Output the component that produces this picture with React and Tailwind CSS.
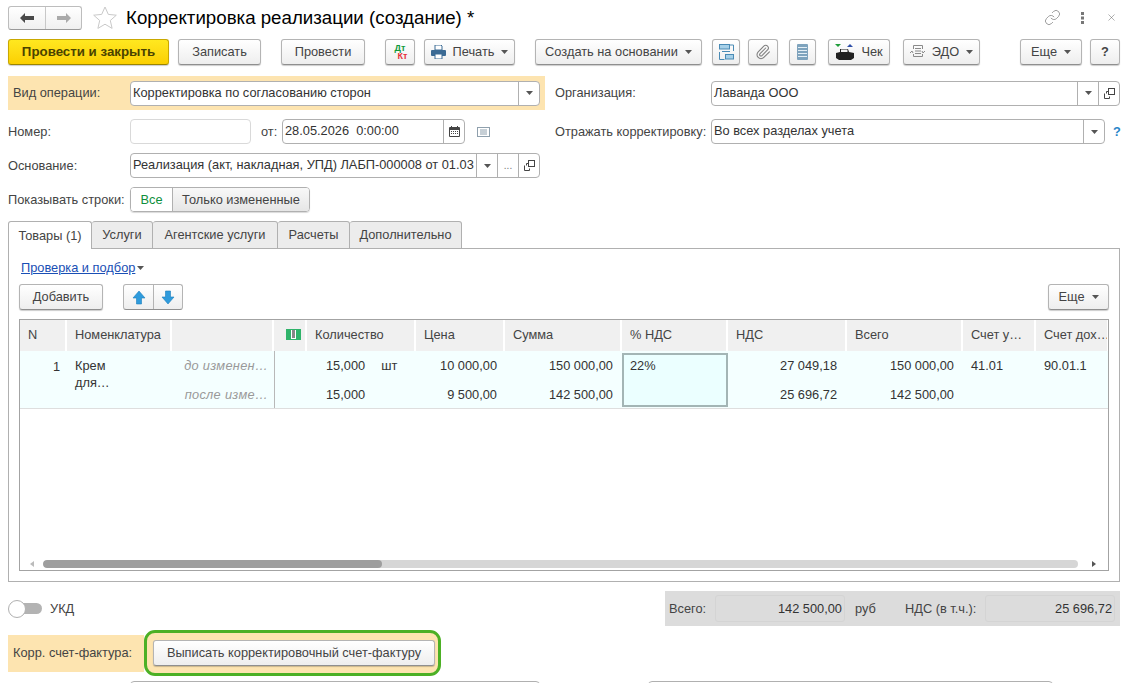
import { Link, Paperclip, X } from "lucide-react";

const ORANGE = "bg-[#fde4b0]";
const COLS = "grid-cols-[47px_105px_102px_33px_109px_89px_117px_106px_119px_116px_73px_73px]";

// small dropdown triangle used on buttons and fields
const Caret = ({ className = "" }) => (
    <svg width="7" height="4" viewBox="0 0 7 4" className={className}>
        <path d="M0 0h7L3.5 4z" fill="#555" />
    </svg>
);

const Btn = ({ className = "", children }) => (
    <button className={`flex h-[26px] shrink-0 items-center justify-center rounded-[3px] border border-[#b4b4b4] border-b-[#8f8f8f] bg-gradient-to-b from-white to-[#eeeeee] text-[#444] shadow-[0_1px_1px_rgba(0,0,0,0.2)] ${className}`}>
        {children}
    </button>
);

const Field = ({ className = "", text, children }) => (
    <div className={`flex h-[25px] shrink-0 items-stretch rounded-[4px] border border-[#b0b0b0] bg-white text-[#333] ${className}`}>
        <div className="min-w-0 flex-1 overflow-hidden whitespace-pre pl-[2px] leading-[22px]">{text}</div>
        {children}
    </div>
);

const FieldBtn = ({ children }) => (
    <div className="flex w-[21px] shrink-0 items-center justify-center border-l border-[#b0b0b0]">{children}</div>
);

const CopyIcon = () => (
    <svg width="11" height="11" viewBox="0 0 11 11" fill="none" stroke="#444">
        <rect x="4.5" y="0.5" width="6" height="6" />
        <path d="M4.5 3.5h-2v2M0.5 5.5v5h5v-2" />
    </svg>
);

const Tab = ({ active, className = "", children }) => (
    <div className={`flex h-[28px] shrink-0 items-center justify-center rounded-t-[3px] border border-l-0 border-[#b0b0b0] first:border-l ${active ? "border-b-0 bg-white" : "bg-[#ececec]"} ${className}`}>
        {children}
    </div>
);

const HeadCell = ({ className = "", children }) => (
    <div className={`flex items-center overflow-hidden whitespace-nowrap border-r-2 border-white bg-[#f0f0f0] pb-[2px] pl-[8px] ${className}`}>
        {children}
    </div>
);

const Num = ({ className = "", children }) => (
    <div className={`flex items-center justify-end whitespace-nowrap ${className}`}>{children}</div>
);

const ArrowBtn = ({ up }) => (
    <svg width="14" height="15" viewBox="0 0 14 15" className={up ? "" : "rotate-180"}>
        <path d="M7 1l6 7H9.5v6h-5V8H1z" fill="#2f9bdc" stroke="#1d7fbd" strokeWidth="0.6" />
    </svg>
);

export default function App() {
    return (
        <div className="h-[683px] w-[1127px] overflow-hidden bg-white px-[8px] pt-[6px] font-['Liberation_Sans',Arial,sans-serif] text-[12.8px] text-[#444]">
            {/* Header */}
            <div className="flex h-[23px] items-center">
                <div className="flex h-[24px] w-[74px] items-stretch rounded-[3px] border border-[#bdbdbd] border-b-[#999] bg-gradient-to-b from-white to-[#f0f0f0]">
                    <div className="flex w-[37px] items-center justify-center border-r border-[#c8c8c8]">
                        <svg width="14" height="10" viewBox="0 0 14 10"><path d="M0 5l5-5v3h9v4H5v3z" fill="#4a4a4a" /></svg>
                    </div>
                    <div className="flex flex-1 items-center justify-center">
                        <svg width="14" height="10" viewBox="0 0 14 10"><path d="M14 5L9 0v3H0v4h9v3z" fill="#aaa" /></svg>
                    </div>
                </div>
                <svg width="24" height="23" viewBox="0 0 24 23" className="ml-[11px]">
                    <path d="M12 1l3.3 7.4 8 .8-6 5.3 1.8 7.9-7.1-4.2-7.1 4.2 1.8-7.9-6-5.3 8-.8z" fill="#fff" stroke="#c9c9c9" />
                </svg>
                <div className="ml-[9px] text-[18.7px] leading-[22px] text-black">Корректировка реализации (создание) *</div>
                <div className="ml-auto flex items-center">
                    <Link size={17} strokeWidth={1} color="#777" className="mr-[20px]" />
                    <svg width="3" height="13" viewBox="0 0 3 13" className="mr-[22px]">
                        <rect y="1" width="3" height="3" fill="#777" />
                        <rect y="5.5" width="3" height="3" fill="#777" />
                        <rect y="10" width="3" height="3" fill="#777" />
                    </svg>
                    <X size={11} strokeWidth={1} color="#555" className="mr-[2px]" />
                </div>
            </div>

            {/* Toolbar */}
            <div className="mt-[10px] flex items-center">
                <button className="flex h-[26px] w-[161px] shrink-0 items-center justify-center rounded-[3px] border border-[#c9a800] border-b-[#9c8500] bg-gradient-to-b from-[#ffe81f] to-[#fbcf00] text-[13.3px] font-bold text-[#4a4300] shadow-[0_1px_1px_rgba(0,0,0,0.2)]">Провести и закрыть</button>
                <Btn className="ml-[9px] w-[83px]">Записать</Btn>
                <Btn className="ml-[20px] w-[84px]">Провести</Btn>
                <Btn className="ml-[20px] w-[30px]">
                    <div className="flex flex-col text-[9px] font-bold leading-[8px]">
                        <span className="text-[#0f9a3c]">Дт</span>
                        <span className="ml-[5px] text-[#e5303a]">Кт</span>
                    </div>
                </Btn>
                <Btn className="ml-[9px] w-[91px]">
                    <svg width="15" height="14" viewBox="0 0 15 14" className="mr-[7px]">
                        <path d="M4 0h6l1 1v4H4z" fill="#fff" stroke="#3b6a94" />
                        <rect y="5" width="15" height="6" rx="1" fill="#3b6a94" />
                        <rect x="4" y="9" width="7" height="5" fill="#fff" stroke="#3b6a94" />
                    </svg>
                    Печать
                    <Caret className="ml-[7px]" />
                </Btn>
                <Btn className="ml-[20px] w-[167px]">
                    Создать на основании
                    <Caret className="ml-[7px]" />
                </Btn>
                <Btn className="ml-[10px] w-[28px]">
                    <svg width="15" height="16" viewBox="0 0 15 16" fill="none" stroke="#4a8bb5">
                        <rect x="0.500" y="0.500" width="10" height="4.500" fill="#a6d0e8" />
                        <rect x="6.500" y="10.500" width="8" height="4.500" fill="#a6d0e8" />
                        <path d="M11 1h3.500v6M.5 8v7.500h5M3 7.500h8" />
                    </svg>
                </Btn>
                <Btn className="ml-[8px] w-[30px]">
                    <Paperclip size={16} strokeWidth={1.6} color="#808080" />
                </Btn>
                <Btn className="ml-[11px] w-[27px]">
                    <svg width="11" height="16" viewBox="0 0 11 16">
                        <rect width="11" height="16" rx="1" fill="#7ea3bd" />
                        <path d="M1 3.500h9M1 6.500h9M1 9.500h9M1 12.500h9" stroke="#e3eef5" />
                    </svg>
                </Btn>
                <Btn className="ml-[12px] w-[62px]">
                    <svg width="20" height="17" viewBox="0 0 20 17" className="mr-[6px]">
                        <path d="M0 0h6L3 3z" fill="#1f9d3a" />
                        <path d="M12 3l3-3 3 3z" fill="#2f4fa8" />
                        <path d="M1 9l4-1V5h8l1 3 5 1v5l-3 2H4l-3-2z" fill="#222" />
                        <path d="M6 5.500h6.500v2.500H6z" fill="#f2f2f2" />
                    </svg>
                    Чек
                </Btn>
                <Btn className="ml-[13px] w-[77px]">
                    <svg width="15" height="14" viewBox="0 0 15 14" fill="none" stroke="#8a8a8a" className="mr-[7px]">
                        <path d="M3.500 4V.5h9V4M3.500 9v2.500h9V9" />
                        <path d="M5 3.500h6M5 6h6M5 8.500h6M0 8l2-2 1 2M15 6l-2 2-1-2" />
                    </svg>
                    ЭДО
                    <Caret className="ml-[7px]" />
                </Btn>
                <Btn className="ml-[40px] w-[62px]">
                    Еще
                    <Caret className="ml-[7px]" />
                </Btn>
                <Btn className="ml-[8px] w-[30px] font-bold">?</Btn>
            </div>

            {/* Вид операции / Организация */}
            <div className="mt-[11px] flex items-center">
                <div className={`flex h-[34px] w-[537px] shrink-0 items-center pl-[5px] ${ORANGE}`}>
                    <div className="w-[117px] shrink-0">Вид операции:</div>
                    <Field className="w-[410px]" text="Корректировка по согласованию сторон">
                        <FieldBtn><Caret /></FieldBtn>
                    </Field>
                </div>
                <div className="ml-[10px] w-[156px] shrink-0">Организация:</div>
                <Field className="w-[409px]" text="Лаванда ООО">
                    <FieldBtn><Caret /></FieldBtn>
                    <FieldBtn><CopyIcon /></FieldBtn>
                </Field>
            </div>

            {/* Номер / Отражать */}
            <div className="mt-[9px] flex items-center">
                <div className="w-[122px] shrink-0">Номер:</div>
                <div className="h-[25px] w-[121px] shrink-0 rounded-[4px] border border-[#d9d9d9]" />
                <div className="ml-[10px] w-[21px] shrink-0">от:</div>
                <Field className="w-[183px]" text="28.05.2026  0:00:00">
                    <FieldBtn>
                        <svg width="11" height="11" viewBox="0 0 11 11">
                            <rect y="1" width="11" height="10" rx="1" fill="#444" />
                            <rect x="1" y="4" width="9" height="6" fill="#fff" />
                            <path d="M2 5.500h7M2 7.500h7" stroke="#444" strokeDasharray="1 1" />
                            <path d="M2.500 0v2M8.500 0v2" stroke="#444" />
                        </svg>
                    </FieldBtn>
                </Field>
                <svg width="13" height="10" viewBox="0 0 13 10" fill="none" stroke="#8fa0ad" className="ml-[12px] shrink-0">
                    <rect x="0.500" y="0.500" width="12" height="9" />
                    <path d="M3 3h7M3 5h7M3 7h7" />
                </svg>
                <div className="ml-[65px] w-[156px] shrink-0 whitespace-nowrap">Отражать корректировку:</div>
                <Field className="w-[394px]" text="Во всех разделах учета">
                    <FieldBtn><Caret /></FieldBtn>
                </Field>
                <div className="ml-[8px] font-bold text-[#2a86c8]">?</div>
            </div>

            {/* Основание */}
            <div className="mt-[9px] flex items-center">
                <div className="w-[122px] shrink-0">Основание:</div>
                <Field className="w-[410px]" text="Реализация (акт, накладная, УПД) ЛАБП-000008 от 01.03">
                    <FieldBtn><Caret /></FieldBtn>
                    <FieldBtn><span className="text-[10px] text-[#777]">...</span></FieldBtn>
                    <FieldBtn><CopyIcon /></FieldBtn>
                </Field>
            </div>

            {/* Показывать строки */}
            <div className="mt-[9px] flex items-center">
                <div className="w-[122px] shrink-0 whitespace-nowrap">Показывать строки:</div>
                <div className="flex h-[25px] w-[180px] shrink-0 overflow-hidden rounded-[4px] border border-[#b0b0b0] shadow-[0_1px_1px_rgba(0,0,0,0.15)]">
                    <div className="flex w-[42px] items-center justify-center border-r border-[#b0b0b0] bg-white text-[#0e8f3c]">Все</div>
                    <div className="flex flex-1 items-center justify-center bg-gradient-to-b from-[#f8f8f8] to-[#e6e6e6]">Только измененные</div>
                </div>
            </div>

            {/* Tabs */}
            <div className="relative z-10 mt-[9px] flex">
                <Tab active className="w-[84px]">Товары (1)</Tab>
                <Tab className="w-[61px]">Услуги</Tab>
                <Tab className="w-[125px]">Агентские услуги</Tab>
                <Tab className="w-[72px]">Расчеты</Tab>
                <Tab className="w-[112px]">Дополнительно</Tab>
            </div>

            {/* Tab panel */}
            <div className="-mt-px flex h-[334px] w-[1112px] flex-col border border-[#b0b0b0] px-[10px] pt-[10px]">
                <div className="flex h-[17px] items-center pl-[2px]">
                    <span className="text-[#1a4fb5] underline">Проверка и подбор</span>
                    <Caret className="ml-[2px]" />
                </div>
                <div className="mt-[8px] flex items-center">
                    <Btn className="w-[84px]">Добавить</Btn>
                    <div className="ml-[20px] flex h-[26px] w-[60px] rounded-[3px] border border-[#b4b4b4] border-b-[#8f8f8f] bg-gradient-to-b from-white to-[#eeeeee]">
                        <div className="flex w-[30px] items-center justify-center border-r border-[#b4b4b4]"><ArrowBtn up /></div>
                        <div className="flex flex-1 items-center justify-center"><ArrowBtn /></div>
                    </div>
                    <Btn className="ml-auto w-[61px]">
                        Еще
                        <Caret className="ml-[7px]" />
                    </Btn>
                </div>

                {/* Table */}
                <div className="mt-[9px] flex h-[252px] w-[1090px] flex-col overflow-hidden border border-[#a3a3a3]">
                    <div className={`grid h-[31px] shrink-0 ${COLS}`}>
                        <HeadCell>N</HeadCell>
                        <HeadCell>Номенклатура</HeadCell>
                        <HeadCell />
                        <HeadCell className="justify-center pl-0">
                            <svg width="15" height="11" viewBox="0 0 15 11">
                                <rect width="15" height="11" fill="#2fb36a" />
                                <rect x="5" y="1" width="5" height="9" fill="#fff" />
                                <path d="M6 2h3M6 4h3M6 6h3M6 8h3" stroke="#111" strokeWidth="1" />
                            </svg>
                        </HeadCell>
                        <HeadCell>Количество</HeadCell>
                        <HeadCell>Цена</HeadCell>
                        <HeadCell>Сумма</HeadCell>
                        <HeadCell>% НДС</HeadCell>
                        <HeadCell>НДС</HeadCell>
                        <HeadCell>Всего</HeadCell>
                        <HeadCell>Счет у…</HeadCell>
                        <HeadCell>Счет дох…</HeadCell>
                    </div>
                    <div className={`grid h-[58px] shrink-0 grid-rows-[29px_28px] border-b border-[#dedede] bg-[#f4ffff] text-[#333] ${COLS}`}>
                        <Num className="row-span-2 !items-start pr-[7px] pt-[6px]">1</Num>
                        <div className="row-span-2 pl-[8px] pt-[6px] leading-[17px]">Крем<br />для…</div>
                        <div className="flex items-center justify-end whitespace-nowrap pr-[6px] italic tracking-[0.3px] text-[#999]">до изменен…</div>
                        <div className="row-span-2 border-l border-[#b8b8b8]" />
                        <div className="flex items-center whitespace-nowrap pl-[19px]">15,000<span className="ml-[16px]">шт</span></div>
                        <Num className="pr-[8px]">10 000,00</Num>
                        <Num className="pr-[9px]">150 000,00</Num>
                        <div className="row-span-2 mb-[1px] mt-[2px] border-2 border-[#a3b5b5] bg-[#ebffff] pl-[6px] pt-[2px] leading-[17px]">22%</div>
                        <Num className="pr-[10px]">27 049,18</Num>
                        <Num className="pr-[9px]">150 000,00</Num>
                        <div className="flex items-center pl-[8px]">41.01</div>
                        <div className="flex items-center pl-[8px]">90.01.1</div>

                        <div className="col-start-3 flex items-center justify-end whitespace-nowrap pr-[6px] pt-[2px] italic tracking-[0.3px] text-[#999]">после изме…</div>
                        <div className="col-start-5 flex items-center pl-[19px] pt-[2px]">15,000</div>
                        <Num className="pr-[8px] pt-[2px]">9 500,00</Num>
                        <Num className="pr-[9px] pt-[2px]">142 500,00</Num>
                        <Num className="col-start-9 pr-[10px] pt-[2px]">25 696,72</Num>
                        <Num className="pr-[9px] pt-[2px]">142 500,00</Num>
                    </div>

                    {/* Horizontal scrollbar */}
                    <div className="mt-auto flex h-[12px] items-center">
                        <svg width="4" height="6" viewBox="0 0 4 6" className="ml-[10px]"><path d="M4 0v6L0 3z" fill="#bbb" /></svg>
                        <div className="ml-[9px] h-[8px] w-[1035px] overflow-hidden rounded-full bg-[#d6d6d6]">
                            <div className="h-full w-[339px] rounded-full bg-[#9e9e9e]" />
                        </div>
                        <svg width="4" height="6" viewBox="0 0 4 6" className="ml-[14px]"><path d="M0 0v6l4-3z" fill="#555" /></svg>
                    </div>
                </div>
            </div>

            {/* УКД and totals */}
            <div className="mt-[9px] flex h-[35px] w-[1112px] items-center">
                <div className="flex w-[36px] shrink-0 items-center">
                    <div className="z-10 h-[18px] w-[18px] rounded-full border border-[#b0b0b0] bg-white" />
                    <div className="-ml-[6px] h-[11px] w-[22px] rounded-r-full bg-[#b3b3b3]" />
                </div>
                <div className="ml-[6px]">УКД</div>
                <div className="ml-auto flex h-[35px] w-[455px] items-center bg-[#dcdcdc] pl-[4px] text-[#444]">
                    <div className="w-[46px] shrink-0">Всего:</div>
                    <div className="flex h-[27px] w-[130px] shrink-0 items-center justify-end rounded-[3px] border border-[#d4d4d4] pr-[2px] text-[#333]">142 500,00</div>
                    <div className="ml-[10px] w-[50px] shrink-0">руб</div>
                    <div className="w-[80px] shrink-0 whitespace-nowrap">НДС (в т.ч.):</div>
                    <div className="flex h-[27px] w-[130px] shrink-0 items-center justify-end rounded-[3px] border border-[#d4d4d4] pr-[2px] text-[#333]">25 696,72</div>
                </div>
            </div>

            {/* Корр. счет-фактура */}
            <div className="mt-[4px] flex items-center">
                <div className={`flex h-[37px] w-[136px] shrink-0 items-center pl-[5px] ${ORANGE}`}>Корр. счет-фактура:</div>
                <div className={`flex h-[46px] w-[297px] shrink-0 items-center rounded-[11px] border-[3px] border-[#4cb025] pl-[6px] ${ORANGE}`}>
                    <Btn className="w-[282px]">Выписать корректировочный счет-фактуру</Btn>
                </div>
            </div>

            {/* Next row is cut off by the window */}
            <div className="mt-[5px] flex">
                <div className="ml-[122px] h-[25px] w-[410px] shrink-0 rounded-[4px] border border-[#b0b0b0]" />
                <div className="ml-[108px] h-[25px] w-[405px] shrink-0 rounded-[4px] border border-[#b0b0b0]" />
            </div>
        </div>
    );
}
